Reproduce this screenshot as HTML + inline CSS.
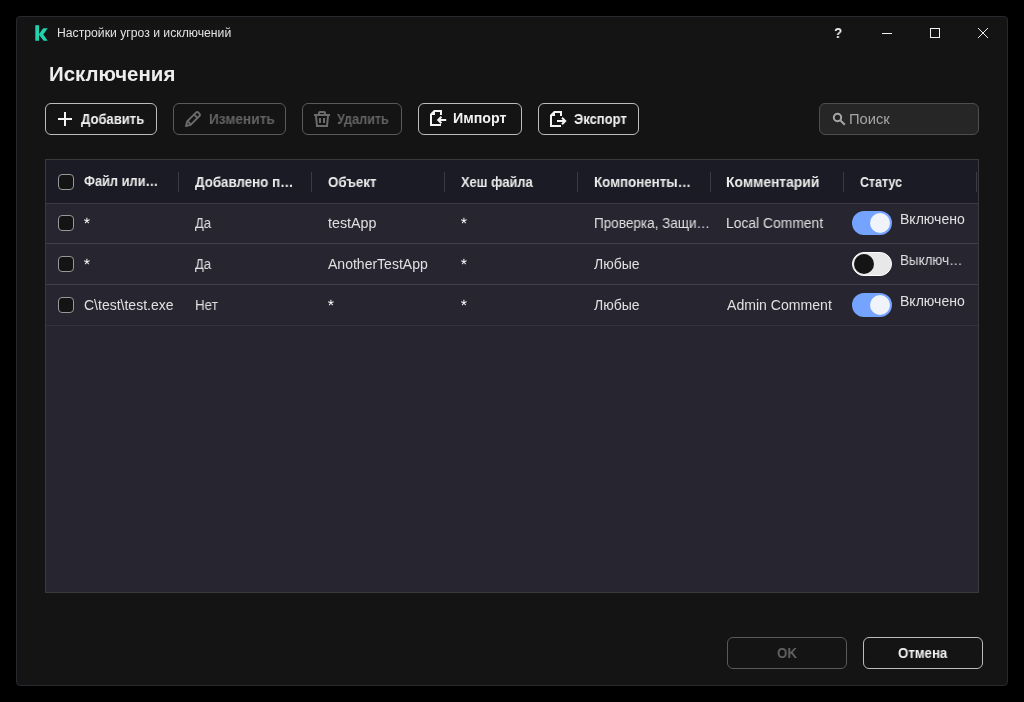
<!DOCTYPE html>
<html lang="ru"><head><meta charset="utf-8"><title>Настройки угроз и исключений</title>
<style>
*{box-sizing:border-box;margin:0;padding:0}
html,body{width:1024px;height:702px;background:#000;overflow:hidden}
body{font-family:"Liberation Sans",sans-serif;color:#e6e6e6;position:relative}
.win{position:absolute;left:16px;top:16px;width:992px;height:670px;background:#141414;border:1px solid #28282e;border-radius:4px}
.a{position:absolute}
.t{position:absolute;white-space:nowrap;display:block;transform-origin:0 0;will-change:transform}
.btn{position:absolute;height:32px;border:1px solid #bcbcbc;border-radius:6px;background:#141414}
.btn.dis{border-color:#5a5a5a}
.search{position:absolute;left:819px;top:103px;width:160px;height:32px;border:1px solid #4e4e4e;border-radius:6px;background:#262626}
.table{position:absolute;left:45px;top:159px;width:934px;height:434px;background:#262530;border:1px solid #3a3a3a}
.thead{position:absolute;left:46px;top:160px;width:932px;height:43px;background:#1b1b25}
.hl{position:absolute;left:46px;width:932px;height:1px}
.sep{position:absolute;top:172px;width:1px;height:20px;background:#3c3b45}
.cb{position:absolute;left:58px;width:16px;height:16px;border:1px solid #989898;border-radius:4px;background:#141414}
.tog{position:absolute;left:852px;width:40px;height:24px;border-radius:12px}
.tog.on{background:#74a4ff}
.tog.off{background:#e8e8e8;border:1px solid #fcfcfc}
.tog i{position:absolute;top:2px;width:20px;height:20px;border-radius:10px}
.tog.on i{left:18px;background:#f0f3f9}
.tog.off i{left:1px;top:1px;background:#141414}
</style></head><body>
<div class="win"></div>
<!-- logo -->
<svg class="a" style="left:35px;top:25px" width="13" height="16" viewBox="0 0 13 16"><path d="M0.3 0.2H4.1V15.8H0.3ZM8.2 3.3H12.7L8.3 9.4L12.7 15.8H8.6L3.8 9.5Z" fill="#23d1ae"/></svg>
<!-- window controls -->
<svg class="a" style="left:830px;top:22px" width="170" height="22" viewBox="0 0 170 22" fill="none" stroke="#f0f0f0" stroke-width="1">
 <path d="M52 11.5H62"/>
 <rect x="100.5" y="6.5" width="9" height="9"/>
 <path d="M148 6L158 16M158 6L148 16"/>
</svg>
<span class="t" style="left:834.4px;top:24px;font-size:15px;line-height:17px;font-weight:bold;color:#f0f0f0;transform:scaleX(0.9)">?</span>

<!-- toolbar -->
<div class="btn" style="left:45px;top:103px;width:112px"></div>
<div class="btn dis" style="left:173px;top:103px;width:113px"></div>
<div class="btn dis" style="left:302px;top:103px;width:100px"></div>
<div class="btn" style="left:418px;top:103px;width:104px"></div>
<div class="btn" style="left:538px;top:103px;width:101px"></div>
<div class="search"></div>
<!-- plus -->
<svg class="a" style="left:58px;top:112px" width="14" height="14" viewBox="0 0 14 14" stroke="#f4f4f4" stroke-width="2" fill="none"><path d="M7 0V14M0 7H14"/></svg>
<!-- pencil -->
<svg class="a" style="left:185px;top:111px" width="16" height="16" viewBox="0 0 16 16" stroke="#6b6b6b" stroke-width="1.9" fill="none" stroke-linejoin="round" stroke-linecap="round"><path d="M1 15L2.2 10.4L11 1.6Q12.2 0.5 13.4 1.6L14.4 2.6Q15.5 3.8 14.4 5L5.6 13.8Z"/><path d="M2.6 10.2L5.8 13.4M9.2 3.6L12.4 6.8"/></svg>
<!-- trash -->
<svg class="a" style="left:314px;top:111px" width="16" height="16" viewBox="0 0 16 16" stroke="#6b6b6b" stroke-width="2" fill="none"><path d="M0 4H16M5 3.6V2Q5 1 6 1H10Q11 1 11 2V3.6M2 5L3 15H13L14 5"/><path d="M6 7V12M10 7V12"/></svg>
<!-- import -->
<svg class="a" style="left:430px;top:110px" width="17" height="16" viewBox="0 0 17 16" stroke="#f4f4f4" stroke-width="2" fill="none"><path d="M11 5V1H4.4L1 4.4V15H11"/><path d="M1 5H5V1L1 5Z" fill="#f4f4f4" stroke="none"/><path d="M16.2 10H8.8M11.4 6.8L8.2 10L11.4 13.2"/></svg>
<!-- export -->
<svg class="a" style="left:550px;top:111px" width="17" height="16" viewBox="0 0 17 16" stroke="#f4f4f4" stroke-width="2" fill="none"><path d="M11 5V1H4.4L1 4.4V15H11"/><path d="M1 5H5V1L1 5Z" fill="#f4f4f4" stroke="none"/><path d="M7 10H14.6M12 6.8L15.2 10L12 13.2"/></svg>
<!-- search icon -->
<svg class="a" style="left:832px;top:112px" width="14" height="14" viewBox="0 0 14 14" stroke="#a8a8a8" stroke-width="2" fill="none"><circle cx="5.5" cy="5.5" r="3.7"/><path d="M8.4 8.4L12.8 12.8"/></svg>

<!-- table -->
<div class="table"></div>
<div class="thead"></div>
<div class="hl" style="top:203px;background:#3a3944"></div>
<div class="hl" style="top:243px;background:#403f4a"></div>
<div class="hl" style="top:284px;background:#403f4a"></div>
<div class="hl" style="top:325px;background:#33323d"></div>
<div class="sep" style="left:178px"></div><div class="sep" style="left:311px"></div><div class="sep" style="left:444px"></div><div class="sep" style="left:577px"></div><div class="sep" style="left:710px"></div><div class="sep" style="left:843px"></div><div class="sep" style="left:976px"></div>
<div class="cb" style="top:174px"></div>
<div class="cb" style="top:215px"></div>
<div class="cb" style="top:256px"></div>
<div class="cb" style="top:297px"></div>
<div class="tog on" style="top:211px"><i></i></div>
<div class="tog off" style="top:252px"><i></i></div>
<div class="tog on" style="top:293px"><i></i></div>

<!-- asterisks -->
<svg class="a" style="left:81px;top:215px" width="12" height="12" viewBox="0 0 12 12" stroke="#f4f4f4" stroke-width="1.05" fill="none"><path d="M5.90 5.75L5.90 2.85M5.90 5.75L8.66 4.85M5.90 5.75L7.60 8.10M5.90 5.75L4.20 8.10M5.90 5.75L3.14 4.85"/></svg>
<svg class="a" style="left:458px;top:215px" width="12" height="12" viewBox="0 0 12 12" stroke="#f4f4f4" stroke-width="1.05" fill="none"><path d="M5.90 5.75L5.90 2.85M5.90 5.75L8.66 4.85M5.90 5.75L7.60 8.10M5.90 5.75L4.20 8.10M5.90 5.75L3.14 4.85"/></svg>
<svg class="a" style="left:81px;top:256px" width="12" height="12" viewBox="0 0 12 12" stroke="#f4f4f4" stroke-width="1.05" fill="none"><path d="M5.90 5.75L5.90 2.85M5.90 5.75L8.66 4.85M5.90 5.75L7.60 8.10M5.90 5.75L4.20 8.10M5.90 5.75L3.14 4.85"/></svg>
<svg class="a" style="left:458px;top:256px" width="12" height="12" viewBox="0 0 12 12" stroke="#f4f4f4" stroke-width="1.05" fill="none"><path d="M5.90 5.75L5.90 2.85M5.90 5.75L8.66 4.85M5.90 5.75L7.60 8.10M5.90 5.75L4.20 8.10M5.90 5.75L3.14 4.85"/></svg>
<svg class="a" style="left:325px;top:297px" width="12" height="12" viewBox="0 0 12 12" stroke="#f4f4f4" stroke-width="1.05" fill="none"><path d="M5.90 5.75L5.90 2.85M5.90 5.75L8.66 4.85M5.90 5.75L7.60 8.10M5.90 5.75L4.20 8.10M5.90 5.75L3.14 4.85"/></svg>
<svg class="a" style="left:458px;top:297px" width="12" height="12" viewBox="0 0 12 12" stroke="#f4f4f4" stroke-width="1.05" fill="none"><path d="M5.90 5.75L5.90 2.85M5.90 5.75L8.66 4.85M5.90 5.75L7.60 8.10M5.90 5.75L4.20 8.10M5.90 5.75L3.14 4.85"/></svg>
<!-- footer -->
<div class="btn dis" style="left:727px;top:637px;width:120px"></div>
<div class="btn" style="left:863px;top:637px;width:120px"></div>

<span class="t" style="left:57.40px;top:26px;font-size:12px;line-height:14px;color:#e2e2e2;transform:scaleX(1.0163)">Настройки угроз и исключений</span>
<span class="t" style="left:48.78px;top:63px;font-size:20px;line-height:22px;font-weight:bold;color:#ededed;transform:scaleX(1.0223)">Исключения</span>
<span class="t" style="left:80.90px;top:111px;font-size:14px;line-height:16px;font-weight:bold;color:#f2f2f2;transform:scaleX(0.9311)">Добавить</span>
<span class="t" style="left:208.80px;top:111px;font-size:14px;line-height:16px;font-weight:bold;color:#646464;transform:scaleX(0.9758)">Изменить</span>
<span class="t" style="left:337.40px;top:111px;font-size:14px;line-height:16px;font-weight:bold;color:#646464;transform:scaleX(0.9017)">Удалить</span>
<span class="t" style="left:453.40px;top:110px;font-size:14px;line-height:16px;font-weight:bold;color:#f2f2f2;transform:scaleX(1.0145)">Импорт</span>
<span class="t" style="left:574.20px;top:111px;font-size:14px;line-height:16px;font-weight:bold;color:#f2f2f2;transform:scaleX(0.9290)">Экспорт</span>
<span class="t" style="left:848.95px;top:111px;font-size:14px;line-height:16px;color:#a6a6a6;transform:scaleX(1.0521)">Поиск</span>
<span class="t" style="left:84.20px;top:173px;font-size:14px;line-height:16px;font-weight:bold;color:#ececec;transform:scaleX(0.9136)">Файл или…</span>
<span class="t" style="left:194.90px;top:174px;font-size:14px;line-height:16px;font-weight:bold;color:#ececec;transform:scaleX(0.9512)">Добавлено п…</span>
<span class="t" style="left:327.70px;top:174px;font-size:14px;line-height:16px;font-weight:bold;color:#ececec;transform:scaleX(0.9468)">Объект</span>
<span class="t" style="left:461.00px;top:174px;font-size:14px;line-height:16px;font-weight:bold;color:#ececec;transform:scaleX(0.9192)">Хеш файла</span>
<span class="t" style="left:593.80px;top:174px;font-size:14px;line-height:16px;font-weight:bold;color:#ececec;transform:scaleX(0.9529)">Компоненты…</span>
<span class="t" style="left:726.40px;top:174px;font-size:14px;line-height:16px;font-weight:bold;color:#ececec;transform:scaleX(0.9899)">Комментарий</span>
<span class="t" style="left:860.30px;top:174px;font-size:14px;line-height:16px;font-weight:bold;color:#ececec;transform:scaleX(0.8888)">Статус</span>
<span class="t" style="left:195.30px;top:215px;font-size:14px;line-height:16px;color:#e0e0e0;transform:scaleX(0.9267)">Да</span>
<span class="t" style="left:328.20px;top:215px;font-size:14px;line-height:16px;color:#e0e0e0;transform:scaleX(1.0195)">testApp</span>
<span class="t" style="left:593.63px;top:215px;font-size:14px;line-height:16px;color:#e0e0e0;transform:scaleX(0.9664)">Проверка, Защи…</span>
<span class="t" style="left:726.41px;top:215px;font-size:14px;line-height:16px;color:#e0e0e0;transform:scaleX(0.9909)">Local Comment</span>
<span class="t" style="left:899.60px;top:211px;font-size:14px;line-height:16px;color:#e0e0e0;transform:scaleX(1.0032)">Включено</span>
<span class="t" style="left:195.30px;top:256px;font-size:14px;line-height:16px;color:#e0e0e0;transform:scaleX(0.9267)">Да</span>
<span class="t" style="left:328.20px;top:256px;font-size:14px;line-height:16px;color:#e0e0e0;transform:scaleX(1.0016)">AnotherTestApp</span>
<span class="t" style="left:594.30px;top:256px;font-size:14px;line-height:16px;color:#e0e0e0;transform:scaleX(0.9980)">Любые</span>
<span class="t" style="left:899.64px;top:252px;font-size:14px;line-height:16px;color:#e0e0e0;transform:scaleX(0.9568)">Выключ…</span>
<span class="t" style="left:83.60px;top:297px;font-size:14px;line-height:16px;color:#e0e0e0;transform:scaleX(0.9962)">C\test\test.exe</span>
<span class="t" style="left:194.74px;top:297px;font-size:14px;line-height:16px;color:#e0e0e0;transform:scaleX(0.9577)">Нет</span>
<span class="t" style="left:594.30px;top:297px;font-size:14px;line-height:16px;color:#e0e0e0;transform:scaleX(0.9980)">Любые</span>
<span class="t" style="left:727.30px;top:297px;font-size:14px;line-height:16px;color:#e0e0e0;transform:scaleX(1.0054)">Admin Comment</span>
<span class="t" style="left:899.60px;top:293px;font-size:14px;line-height:16px;color:#e0e0e0;transform:scaleX(1.0032)">Включено</span>
<span class="t" style="left:776.80px;top:645px;font-size:14px;line-height:16px;font-weight:bold;color:#626262;transform:scaleX(0.9463)">OK</span>
<span class="t" style="left:898.00px;top:645px;font-size:14px;line-height:16px;font-weight:bold;color:#f2f2f2;transform:scaleX(0.9457)">Отмена</span>
</body></html>
